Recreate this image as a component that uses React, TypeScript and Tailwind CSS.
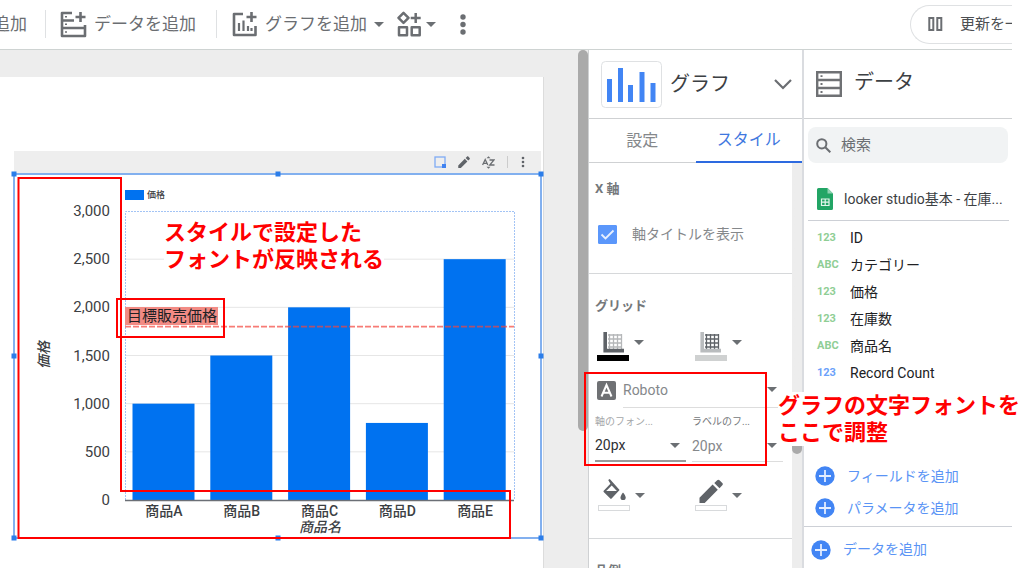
import { useState } from 'react'
import type { ReactNode } from 'react'

const products = [
  { name: '商品A', price: 1000 },
  { name: '商品B', price: 1500 },
  { name: '商品C', price: 2000 },
  { name: '商品D', price: 800 },
  { name: '商品E', price: 2500 },
]

const fields = [
  { type: '123', name: 'ID', color: 'text-[#8fce95]' },
  { type: 'ABC', name: 'カテゴリー', color: 'text-[#8fce95]' },
  { type: '123', name: '価格', color: 'text-[#8fce95]' },
  { type: '123', name: '在庫数', color: 'text-[#8fce95]' },
  { type: 'ABC', name: '商品名', color: 'text-[#8fce95]' },
  { type: '123', name: 'Record Count', color: 'text-[#6ba1fa]' },
]

function Caret({ className = '' }: { className?: string }) {
  return (
    <svg viewBox="0 0 10 5" className={`w-[10px] h-[5px] shrink-0 fill-[#6b6f73] ${className}`}>
      <path d="M0 0h10L5 5z" />
    </svg>
  )
}

function AddDataIcon() {
  return (
    <svg viewBox="0 0 27 27" className="w-[27px] h-[27px] shrink-0" fill="none" stroke="#6b6e72" strokeWidth="2.6" strokeLinejoin="round">
      <path d="M12 2H2V25H25V14M2 9.5H14M2 17H25" />
      <path d="M20.5 1v10M15.5 6h10" />
      <path d="M5 5.7h2M5 13.2h2M5 21h2" strokeWidth="1.6" />
    </svg>
  )
}

function AddChartIcon() {
  return (
    <svg viewBox="0 0 26 27" className="w-[26px] h-[27px] shrink-0" fill="none" stroke="#6b6e72" strokeWidth="2.6" strokeLinejoin="round">
      <path d="M11 3H2V24H23.5V15" />
      <path d="M19.5 1v10M14.5 6h10" />
      <path d="M7 12v8M11.5 9.5v10.5M16 15v5M19.5 17v3" strokeWidth="2.2" />
    </svg>
  )
}

function ComponentsIcon() {
  return (
    <svg viewBox="0 0 25 26" className="w-[25px] h-[26px] shrink-0" fill="none" stroke="#6b6e72" strokeWidth="2.5" strokeLinejoin="round">
      <path d="M6.5 1.8l5 5-5 5-5-5z" />
      <path d="M18.7 2v10M13.7 7h10" />
      <rect x="2" y="16.2" width="8" height="8" />
      <rect x="14.7" y="16.2" width="8" height="8" />
    </svg>
  )
}

function PlusCircle() {
  return (
    <svg viewBox="0 0 20 20" className="w-5 h-5 shrink-0">
      <circle cx="10" cy="10" r="9.7" fill="#4285f4" />
      <path d="M10 4v12M4 10h12" stroke="#e3edff" strokeWidth="1.8" />
    </svg>
  )
}

function GridIcon({ axis, grid }: { axis: string; grid: string }) {
  return (
    <svg viewBox="0 0 21 21" className="w-[21px] h-[21px]" fill="none">
      <path d="M5 3h14M5 7h14M5 11h14M5 15h14M6.5 2v15M10.5 2v15M14.5 2v15M18.5 2v15" stroke={grid} strokeWidth="1.3" />
      <path d="M2.2 0v18.6H21" stroke={axis} strokeWidth="3.6" />
    </svg>
  )
}

function BucketIcon() {
  return (
    <svg viewBox="0 0 23 24" className="w-[23px] h-6" fill="#5f6368">
      <path d="M5.2 1l1.6-1 9.8 11-8 8.6a1 1 0 0 1-1.3 0L.7 13a1 1 0 0 1 0-1.3L7.4 4.7zM8.7 6.4L3.2 12h10.7z" />
      <path d="M20 13.5s2.7 3.2 2.7 4.9a2.5 2.5 0 0 1-5.2 0c0-1.7 2.5-4.9 2.5-4.9z" />
    </svg>
  )
}

function PencilIcon({ className = '' }: { className?: string }) {
  return (
    <svg viewBox="0 0 24 24" className={className} fill="#5f6368">
      <path d="M0.5 18.8V24h5.2L18.8 10.8l-5.2-5.2zM23.3 6.3c.7-.7.7-1.7 0-2.3L20.5 1.2c-.6-.7-1.7-.7-2.3 0L15.3 4l5.2 5.2z" />
    </svg>
  )
}

function Toolbar() {
  return (
    <header className="flex h-[50px] shrink-0 items-center overflow-hidden border-b border-[#ced3d2] pb-px text-[17px] leading-6 text-[#6b6e72]">
      <button className="flex w-[27px] justify-end overflow-hidden whitespace-nowrap">追加</button>
      <span className="ml-[18px] h-7 w-px bg-[#dfe1e3]" />
      <button className="ml-[14px] flex items-center gap-[7px] whitespace-nowrap">
        <AddDataIcon />
        データを追加
      </button>
      <span className="ml-5 h-7 w-px bg-[#dfe1e3]" />
      <button className="ml-[15px] flex items-center gap-[7px] whitespace-nowrap">
        <AddChartIcon />
        グラフを追加
        <Caret />
      </button>
      <button aria-label="コントロールを追加" className="ml-[13px] flex items-center gap-1">
        <ComponentsIcon />
        <Caret />
      </button>
      <button aria-label="その他" className="ml-6">
        <svg viewBox="0 0 6 21" className="h-[21px] w-[6px] fill-[#6b6e72]">
          <circle cx="3" cy="3" r="2.7" />
          <circle cx="3" cy="10.5" r="2.7" />
          <circle cx="3" cy="18" r="2.7" />
        </svg>
      </button>
      <button className="ml-auto flex h-[39px] w-[102px] items-center gap-[17px] overflow-hidden rounded-l-full border border-r-0 border-[#dfe1e3] pl-[17px] text-[15px] whitespace-nowrap text-[#4c4f53]">
        <svg viewBox="0 0 15 14" className="h-[14px] w-[15px] shrink-0" fill="none" stroke="#6b6e72" strokeWidth="2">
          <rect x="1.3" y="1" width="4" height="12" />
          <rect x="9.3" y="1" width="4" height="12" />
        </svg>
        更新を一時停止
      </button>
    </header>
  )
}

// plot area inside the chart drawing
const plot = { left: 111, right: 500, top: 38, bottom: 327 }
const scaleY = (value: number) => plot.bottom - (value / 3000) * (plot.bottom - plot.top)

function PriceChart() {
  const step = (plot.right - plot.left) / products.length
  return (
    <svg viewBox="0 0 527 365" className="block w-full overflow-visible" fontFamily='Roboto, "Noto Sans CJK JP", sans-serif' fontSize="15" fill="#3c4043">
      <rect x="111" y="17" width="19" height="10" fill="#0072f0" />
      <text x="133" y="25" fontSize="9" fontWeight="500">価格</text>

      {[500, 1000, 1500, 2000, 2500].map((v) => (
        <path key={v} d={`M${plot.left} ${scaleY(v)}H${plot.right}`} stroke="#e6e6e6" />
      ))}
      {[0, 500, 1000, 1500, 2000, 2500, 3000].map((v) => (
        <text key={v} x="96" y={scaleY(v) + 5} textAnchor="end">{v.toLocaleString('en-US')}</text>
      ))}
      <path d="M111.5 327V38.5H500.5V327" fill="none" stroke="#a3c4f5" strokeDasharray="2 1" />

      {products.map((p, i) => (
        <g key={p.name}>
          <rect x={plot.left + step * i + 7.5} y={scaleY(p.price)} width="62" height={plot.bottom - scaleY(p.price)} fill="#0072f0" />
          <text x={plot.left + step * (i + 0.5)} y="343" fontSize="14" fontWeight="500" textAnchor="middle">{p.name}</text>
        </g>
      ))}
      <path d="M111 327.5H500" stroke="#6b6f76" strokeWidth="1.5" />
      <text x="306" y="359" fontSize="14" fontWeight="500" textAnchor="middle" fontStyle="italic">商品名</text>
      <text transform="translate(35 182) rotate(-90)" fontSize="14" fontWeight="500" textAnchor="middle" fontStyle="italic">価格</text>

      {/* Reference line */}
      <path d={`M111 ${scaleY(1800)}H500`} stroke="#f4443c" strokeOpacity="0.7" strokeWidth="1.8" strokeDasharray="6 2" />
      <rect x="111" y="134" width="93" height="18" fill="#f28b84" />
      <text x="113" y="148" fill="#202124">目標販売価格</text>

      {/* Selection frame */}
      <rect x="0" y="1" width="527" height="364" fill="none" stroke="#5a96ea" strokeWidth="1.5" />
      {[0, 264, 527].map((x) =>
        [1, 183, 365].map((y) =>
          x === 264 && y === 183 ? null : <rect key={`${x}-${y}`} x={x - 2.5} y={y - 2.5} width="5" height="5" fill="#2b7de9" />
        )
      )}

      <g fill="none" stroke="#f00" strokeWidth="2">
        <path d="M4.500 5H107V318H496V365H4.500z" />
        <rect x="103" y="126" width="107" height="38" />
      </g>
    </svg>
  )
}

function Canvas() {
  return (
    <main className="flex min-w-0 flex-1 overflow-hidden bg-[#ededed]">
      <div className="mt-[27px] mr-[34px] min-w-0 flex-1 border-r border-[#dcdcdc] bg-white pt-[74px] pr-[2px] pl-[14px]">
        <div className="flex h-[22px] items-center justify-end gap-3 bg-[#eee] pr-[15px]">
          <button aria-label="範囲">
            <svg viewBox="0 0 12 12" className="h-3 w-3" fill="none">
              <rect x="1" y="1" width="10" height="10" stroke="#7fabf5" strokeWidth="1.3" />
              <path d="M8 8h4v4H8z" fill="#3f82f0" />
            </svg>
          </button>
          <button aria-label="編集">
            <PencilIcon className="h-3 w-3" />
          </button>
          <button aria-label="並べ替え">
            <svg viewBox="0 0 13 13" className="h-[13px] w-[13px]" fill="none" stroke="#6b6e72" strokeWidth="1.3">
              <path d="M.6 9L3.2 3.5 5.8 9M1.5 7.3H5M7.5 4h4.5L7.7 9H12.5" />
              <path d="M4.5 2.2l2-2 2 2zM4.5 10.8l2 2 2-2z" fill="#6b6e72" stroke="none" />
            </svg>
          </button>
          <span className="h-3 w-px bg-[#ccc]" />
          <button aria-label="グラフのメニュー">
            <svg viewBox="0 0 6 12" className="h-3 w-[6px] fill-[#5f6368]">
              <circle cx="3" cy="2" r="1.3" />
              <circle cx="3" cy="6" r="1.3" />
              <circle cx="3" cy="10" r="1.3" />
            </svg>
          </button>
        </div>
        <PriceChart />
      </div>
      <div className="h-[381px] w-[10px] rounded-md bg-[#aaa]" />
    </main>
  )
}

function ColorTool({ label, icon, swatch, caret }: { label: string; icon: ReactNode; swatch: string; caret?: string }) {
  return (
    <button aria-label={label} className="flex flex-1 items-center gap-[5px]">
      <span className="flex w-8 flex-col items-center gap-[2px]">
        {icon}
        <span className={`h-[6px] w-full ${swatch}`} />
      </span>
      <Caret className={caret} />
    </button>
  )
}

function SizeSelect({ id, label, active }: { id: string; label: string; active?: boolean }) {
  return (
    <div className="min-w-0 flex-1">
      <label htmlFor={id} className={`block text-[10px] leading-4 whitespace-nowrap ${active ? 'text-[#a5a7a9]' : 'text-[#75787b]'}`}>{label}</label>
      <div className={`relative flex h-8 items-center ${active ? 'border-b-2 border-[#9a9a9a]' : 'border-b border-[#ddd]'}`}>
        <select id={id} className={`w-full appearance-none bg-transparent text-[14px] leading-5 outline-none ${active ? 'text-[#2d3033]' : 'text-[#85888b]'}`}>
          <option>20px</option>
        </select>
        <Caret className="pointer-events-none absolute right-[6px]" />
      </div>
    </div>
  )
}

function StylePanel() {
  const [showTitle, setShowTitle] = useState(true)

  return (
    <aside className="flex w-[214px] shrink-0 flex-col border-l border-[#cfd1d3] bg-white">
      <button className="flex h-[69px] shrink-0 items-center border-b border-[#cfd1d3] pr-[10px] pl-3 text-[20px] leading-7 text-[#3c4043]">
        <svg viewBox="0 0 61 47" className="h-[47px] w-[61px]">
          <rect x="0.5" y="0.5" width="60" height="46" rx="4" fill="none" stroke="#dfe1e3" />
          <path d="M8.5 41V18M19.5 41V7M29.5 41V24M41 41V11M52 41V22" stroke="#4285f4" strokeWidth="5" />
        </svg>
        <span className="ml-2">グラフ</span>
        <svg viewBox="0 0 18 11" className="ml-auto h-[11px] w-[18px]" fill="none" stroke="#6b6e72" strokeWidth="2.2">
          <path d="M1 1l8 8 8-8" />
        </svg>
      </button>

      <div role="tablist" className="flex h-[44px] shrink-0 text-[16px]">
        <button role="tab" aria-selected="false" className="flex-1 border-b border-[#cfd1d3] text-[#85888b]">設定</button>
        <button role="tab" aria-selected="true" className="flex-1 border-b-2 border-[#2d6ae0] text-[#3f78e0]">スタイル</button>
      </div>

      <div className="flex min-h-0 flex-1">
        <div className="min-w-0 flex-1 overflow-hidden text-[#75787b]">
          <section className="h-[111px] border-b border-[#d6d8da] pt-4 pl-[6px]">
            <h3 className="text-[13px] leading-5 font-bold">X 軸</h3>
            <label className="mt-[25px] flex items-center text-[14px] leading-5 text-[#85888b]">
              <span className="relative ml-[3px] flex h-[19px] w-[19px]">
                <input type="checkbox" checked={showTitle} onChange={(e) => setShowTitle(e.target.checked)} className="peer h-full w-full appearance-none rounded-[1px] border border-[#5b97fb] checked:bg-[#5b97fb]" />
                <svg viewBox="0 0 19 19" className="pointer-events-none absolute inset-0 hidden peer-checked:block" fill="none" stroke="#e8f0fe" strokeWidth="1.8">
                  <path d="M3.5 9.5l4 4 8-8" />
                </svg>
              </span>
              <span className="ml-[15px]">軸タイトルを表示</span>
            </label>
          </section>

          <section className="h-[265px] border-b border-[#d6d8da] pt-[22px] pl-[6px]">
            <h3 className="text-[13px] leading-5 font-bold">グリッド</h3>
            <div className="mt-4 flex pl-[2px]">
              <ColorTool label="軸の色" icon={<GridIcon axis="#5f6368" grid="#b5b7b9" />} swatch="bg-black" caret="-mt-2" />
              <ColorTool label="グリッドの色" icon={<GridIcon axis="#b9bcbe" grid="#5f6368" />} swatch="bg-[#cfd1d1]" caret="-mt-2" />
            </div>

            <div className="mt-3 flex items-center gap-[7px] pl-[2px]">
              <svg viewBox="0 0 19 19" className="h-[19px] w-[19px] shrink-0">
                <rect width="19" height="19" rx="2" fill="#6f7174" />
                <path d="M4.5 15.5L9.500 4l5 11.5M6.300 11.800h6.400" fill="none" stroke="#fff" strokeWidth="2" />
              </svg>
              <div className="relative mr-[9px] flex h-[35px] flex-1 items-center border-b border-[#ddd] pb-px">
                <select aria-label="フォント" className="w-full appearance-none bg-transparent text-[14px] leading-5 text-[#85888b] outline-none">
                  <option>Roboto</option>
                </select>
                <Caret className="pointer-events-none absolute right-[6px]" />
              </div>
            </div>

            <div className="mt-[6px] mr-[9px] flex gap-[6px]">
              <SizeSelect id="axis-size" label="軸のフォン..." active />
              <SizeSelect id="label-size" label="ラベルのフ..." />
            </div>

            <div className="mt-[17px] flex pl-[3px]">
              <ColorTool label="背景色" icon={<BucketIcon />} swatch="border border-[#d8dadc]" />
              <ColorTool label="枠線の色" icon={<PencilIcon className="h-6 w-6" />} swatch="border border-[#d8dadc]" />
            </div>
          </section>

          <section className="pt-[22px] pl-[6px]">
            <h3 className="text-[13px] leading-5 font-bold">凡例</h3>
          </section>
        </div>
        <div className="w-[10px] bg-[#ededed]">
          <div className="h-[291px] rounded-b-full bg-gradient-to-b from-[#ededed] from-80% to-[#aaa] to-80%" />
        </div>
      </div>
    </aside>
  )
}

function DataPanel() {
  return (
    <aside className="flex w-[210px] shrink-0 flex-col border-l-2 border-[#dadce0] bg-white">
      <div className="flex h-[69px] shrink-0 items-center gap-3 border-b border-[#cfd1d3] pl-3">
        <svg viewBox="0 0 26 26" className="h-[26px] w-[26px]" fill="none" stroke="#6f7174" strokeWidth="2.4">
          <path d="M1.2 1.2h23.6v23.6H1.2zM1.2 9h23.6M1.2 17h23.6" />
          <path d="M4.5 5.1h2M4.5 13h2M4.5 21h2" strokeWidth="1.8" />
        </svg>
        <h2 className="pb-1 text-[20px] leading-7 text-[#3c4043]">データ</h2>
      </div>

      <label className="mt-2 mr-1 ml-1 flex h-9 shrink-0 items-center gap-[10px] rounded-lg bg-[#f1f3f4] pl-2">
        <svg viewBox="0 0 15 15" className="h-[15px] w-[15px] shrink-0" fill="none" stroke="#6b6e72" strokeWidth="2">
          <circle cx="5.8" cy="5.8" r="4.6" />
          <path d="M9.3 9.3l5 5" />
        </svg>
        <input aria-label="検索" placeholder="検索" className="w-full min-w-0 bg-transparent text-[15px] leading-5 outline-none placeholder:text-[#6b6e72]" />
      </label>

      <div className="mt-[15px] mr-[3px] ml-1 flex h-[43px] shrink-0 items-center gap-[11px] border-b border-[#cdd0d6] pl-[9px]">
        <svg viewBox="0 0 16 22" className="h-[22px] w-4 shrink-0">
          <path d="M1.5 0H10.5L16 5.5V20.5a1.5 1.5 0 0 1-1.5 1.5H1.5A1.5 1.5 0 0 1 0 20.5V1.5A1.5 1.5 0 0 1 1.5 0z" fill="#22a565" />
          <path d="M10.5 0L16 5.5H10.5z" fill="#8ed1b1" />
          <path d="M4.5 11h7.5v6.5H4.5zM4.5 14.2H12M8.2 11v6.5" fill="none" stroke="#e4f5ec" strokeWidth="1.2" />
        </svg>
        <span className="text-[14px] leading-5 whitespace-nowrap text-[#3c4043]">looker studio基本 - 在庫...</span>
      </div>

      <ul className="mt-1 text-[14px] text-[#202124]">
        {fields.map((f) => (
          <li key={f.name} className="flex h-[27px] items-center pl-[13px]">
            <span className={`w-[33px] text-[11px] font-bold ${f.color}`}>{f.type}</span>
            {f.name}
          </li>
        ))}
      </ul>

      <div className="mt-auto pb-[2px] text-[14px] text-[#5a94f5]">
        <button className="flex h-8 items-center gap-3 pl-[11px]">
          <PlusCircle />
          フィールドを追加
        </button>
        <button className="flex h-8 items-center gap-3 pl-[11px]">
          <PlusCircle />
          パラメータを追加
        </button>
      </div>
      <div className="flex h-[42px] shrink-0 items-center border-t border-[#cdd0d6] pt-1 text-[14px] text-[#5a94f5]">
        <button className="flex items-center gap-3 pl-[7px]">
          <PlusCircle />
          データを追加
        </button>
      </div>
    </aside>
  )
}

export default function App() {
  return (
    <div className="relative flex h-screen min-h-[576px] flex-col overflow-hidden bg-white pr-3 pb-2 font-[Roboto,'Noto_Sans_CJK_JP',sans-serif]">
      <Toolbar />
      <div className="flex min-h-0 flex-1">
        <Canvas />
        <StylePanel />
        <DataPanel />
      </div>

      {/* Callouts */}
      <p className="absolute top-[219px] left-[164px] text-[22px] leading-[27px] font-bold whitespace-nowrap text-[#f00]">
        <span className="block w-fit bg-white">スタイルで設定した</span>
        <span className="block w-fit bg-white">フォントが反映される</span>
      </p>
      <div className="pointer-events-none absolute top-[372px] right-[257px] h-[94px] w-[183px] border-2 border-[#f00]" />
      <p className="absolute top-[392px] right-[4px] text-[22px] leading-[27px] font-bold whitespace-nowrap text-[#f00]">
        <span className="block w-fit bg-white">グラフの文字フォントを</span>
        <span className="block w-fit bg-white">ここで調整</span>
      </p>
    </div>
  )
}
